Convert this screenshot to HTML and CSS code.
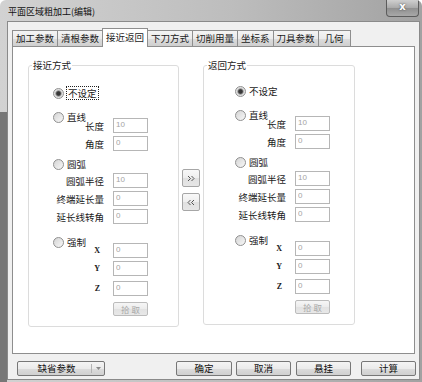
FILE: index.html
```html
<!DOCTYPE html>
<html lang="zh-CN">
<head>
  <meta charset="UTF-8" />
  <title>平面区域粗加工(编辑)</title>
  <link rel="stylesheet" href="styles.css">
</head>
<body>

  <div class="window">
    <div class="titlebar">
      <span class="title">平面区域粗加工(编辑)</span>
      <span class="close">x</span>
    </div>

    <div class="client">
      <div class="tabs">
        <span class="tab">加工参数</span>
        <span class="tab">清根参数</span>
        <span class="tab active">接近返回</span>
        <span class="tab">下刀方式</span>
        <span class="tab">切削用量</span>
        <span class="tab">坐标系</span>
        <span class="tab">刀具参数</span>
        <span class="tab">几何</span>
      </div>

      <div class="panel">
        <!-- 接近方式 -->
        <fieldset class="group">
          <legend>接近方式</legend>
          <div class="opt first"><span class="radio on"></span><span class="focus">不设定</span></div>

          <div class="opt"><span class="radio"></span>直线</div>
          <div class="field sub"><label>长度</label><input value="10" disabled></div>
          <div class="field"><label>角度</label><input value="0" disabled></div>

          <div class="opt near"><span class="radio"></span>圆弧</div>
          <div class="field tight"><label>圆弧半径</label><input value="10" disabled></div>
          <div class="field"><label>终端延长量</label><input value="0" disabled></div>
          <div class="field"><label>延长线转角</label><input value="0" disabled></div>

          <div class="opt far"><span class="radio"></span>强制</div>
          <div class="field sub"><label class="axis">X</label><input value="0" disabled></div>
          <div class="field"><label class="axis">Y</label><input value="0" disabled></div>
          <div class="field wide"><label class="axis">Z</label><input value="0" disabled></div>
          <div class="field wide"><span></span><button class="pick" disabled>拾 取</button></div>
        </fieldset>

        <div class="arrows">
          <button class="arrow">
            <svg width="8" height="7" viewBox="0 0 8 7"><path d="M1 1l2.5 2.5L1 6M4.5 1L7 3.5 4.5 6" fill="none" stroke="#555" stroke-width="1"/></svg>
          </button>
          <button class="arrow">
            <svg width="8" height="7" viewBox="0 0 8 7"><path d="M3.5 1L1 3.5 3.5 6M7 1L4.5 3.5 7 6" fill="none" stroke="#555" stroke-width="1"/></svg>
          </button>
        </div>

        <!-- 返回方式 -->
        <fieldset class="group right">
          <legend>返回方式</legend>
          <div class="opt first up"><span class="radio on"></span>不设定</div>

          <div class="opt"><span class="radio"></span>直线</div>
          <div class="field sub"><label>长度</label><input value="10" disabled></div>
          <div class="field"><label>角度</label><input value="0" disabled></div>

          <div class="opt near"><span class="radio"></span>圆弧</div>
          <div class="field tight"><label>圆弧半径</label><input value="10" disabled></div>
          <div class="field"><label>终端延长量</label><input value="0" disabled></div>
          <div class="field"><label>延长线转角</label><input value="0" disabled></div>

          <div class="opt far"><span class="radio"></span>强制</div>
          <div class="field sub"><label class="axis">X</label><input value="0" disabled></div>
          <div class="field"><label class="axis">Y</label><input value="0" disabled></div>
          <div class="field wide"><label class="axis">Z</label><input value="0" disabled></div>
          <div class="field wide"><span></span><button class="pick" disabled>拾 取</button></div>
        </fieldset>
      </div>

      <div class="footer">
        <button class="btn split">
          <span class="split-text">缺省参数</span>
          <span class="split-arrow">
            <svg width="5" height="3" viewBox="0 0 5 3"><path d="M0 0h5L2.5 3z" fill="#8a8a8a"/></svg>
          </span>
        </button>
        <button class="btn ok">确定</button>
        <button class="btn cancel">取消</button>
        <button class="btn hang">悬挂</button>
        <button class="btn calc">计算</button>
      </div>
    </div>
  </div>

</body>
</html>
```

FILE: styles.css
```css
* {
  box-sizing: border-box;
}

body {
  margin: 0;
  font-family: "Noto Sans CJK SC", "Noto Sans", sans-serif;
  font-size: 9.5px;
  color: #1a1a1a;
}

button,
input {
  font-family: inherit;
}

.window {
  width: 422px;
  height: 382px;
  display: flex;
  flex-direction: column;
  border-radius: 6px 6px 0 0;
  overflow: hidden;
  background:
    linear-gradient(#777, #777) 0 112px / 7px 100% no-repeat,
    linear-gradient(to right, #d2d2d2, #bdbdbd 55%, #a2a2a2);
}

/* title bar */
.titlebar {
  height: 21px;
  display: flex;
  justify-content: space-between;
}

.title {
  font-size: 9px;
  line-height: 12px;
  padding: 6px 0 0 8px;
  color: #111;
}

.close {
  width: 33px;
  height: 17px;
  margin-right: 3px;
  border: 1px solid #5c5c5c;
  border-top: none;
  border-radius: 0 0 4px 4px;
  background: linear-gradient(#cfcfcf, #a9a9a9 50%, #8f8f8f 50%, #a8a8a8);
  color: #fff;
  font-family: "DejaVu Sans", sans-serif;
  font-weight: bold;
  font-size: 10px;
  line-height: 14px;
  text-align: center;
  text-shadow: 0 0 2px #444;
}

/* client area */
.client {
  flex: 1;
  margin: 0 2px 2px 7px;
  border: 1px solid #8a8a8a;
  background: #f0f0f0;
}

.tabs {
  height: 24px;
  padding: 6px 0 0 4px;
  display: flex;
  align-items: flex-end;
}

.tab {
  height: 16px;
  min-width: 33px;
  padding: 0 3px;
  margin-right: -1px;
  border: 1px solid #8e8e8e;
  border-bottom: none;
  background: linear-gradient(#f4f4f4, #ebebeb 50%, #dddddd 50%, #cfcfcf);
  line-height: 14px;
  text-align: center;
}

.tab.active {
  height: 19px;
  margin-bottom: -1px;
  position: relative;
  z-index: 1;
  background: #fff;
  line-height: 16px;
}

.panel {
  height: 308px;
  margin: 0 4px;
  padding: 12px 0 0 15px;
  border: 1px solid #8e8e8e;
  background: #fff;
  display: flex;
  align-items: flex-start;
}

/* group boxes */
.group {
  width: 151px;
  margin: 0;
  padding: 0 0 10px 0;
  border: 1px solid #dcdcdc;
  border-radius: 3px;
  min-width: 0;
}

.group.right {
  width: 152px;
  padding-left: 7px;
}

.group legend {
  margin-left: 3px;
  padding: 0 1px;
  line-height: 12px;
}

.group.right legend {
  margin-left: -4px;
}

.opt {
  height: 14px;
  margin-top: 10px;
  padding-left: 24px;
  display: flex;
  align-items: center;
  gap: 3px;
  line-height: 14px;
}

.opt.first {
  margin-top: 15px;
}

.opt.up {
  margin-top: 13px;
}

.opt.near {
  margin-top: 6px;
}

.opt.far {
  margin-top: 11px;
}

.radio {
  width: 11px;
  height: 11px;
  border-radius: 50%;
  border: 1px solid #909090;
  background: linear-gradient(135deg, #d4d4d4, #f8f8f8);
}

.radio.on {
  background: radial-gradient(circle, #383838 0 1.8px, #8a8a8a 2.6px, #dcdcdc 3.6px, #f4f4f4);
}

.focus {
  outline: 1px dotted #222;
  outline-offset: 0;
  padding: 0 1px;
  line-height: 12px;
}

.field {
  height: 15px;
  margin-top: 3px;
  display: grid;
  grid-template-columns: 75px 35px;
  column-gap: 9px;
  align-items: center;
}

.field.sub {
  margin-top: -6px;
}

.field.tight {
  margin-top: 2px;
}

.field.wide {
  margin-top: 5px;
}

.field label {
  text-align: right;
  line-height: 14px;
}

.field label.axis {
  padding-right: 4px;
  font-family: "Liberation Serif", serif;
  font-weight: bold;
  font-size: 8px;
}

.field input {
  width: 35px;
  height: 15px;
  margin: 0;
  padding: 0 2px 3px;
  border: 1px solid #b6b6b6;
  background: #fff;
  color: #a4a4a4;
  font-family: "Liberation Sans", sans-serif;
  font-size: 8px;
}

.pick {
  width: 35px;
  height: 14px;
  padding: 0;
  border: 1px solid #bcbcbc;
  border-radius: 2px;
  background: linear-gradient(#f6f6f6, #ececec 50%, #e2e2e2 50%, #e8e8e8);
  color: #a8a8a8;
  font-size: 8.5px;
  line-height: 12px;
}

/* transfer buttons */
.arrows {
  width: 24px;
  padding: 110px 0 0 3px;
  display: flex;
  flex-direction: column;
  gap: 6px;
}

.arrow {
  width: 18px;
  height: 18px;
  padding: 0;
  border: 1px solid #a6a6a6;
  border-radius: 2px;
  background: linear-gradient(#f8f8f8, #eeeeee 50%, #e0e0e0 50%, #e6e6e6);
  display: flex;
  align-items: center;
  justify-content: center;
}

/* bottom buttons */
.footer {
  height: 25px;
  padding: 7px 3px 0 9px;
  display: flex;
  align-items: flex-start;
}

.btn {
  height: 15px;
  width: 55px;
  padding: 0;
  border: 1px solid #777;
  border-radius: 2px;
  background: linear-gradient(#f4f4f4, #ebebeb 50%, #dcdcdc 50%, #d0d0d0);
  color: #111;
  font-size: 9.5px;
  line-height: 13px;
}

.btn.split {
  width: 88px;
  display: flex;
  align-items: center;
}

.split-text {
  flex: 1;
  text-align: center;
  padding-left: 4px;
}

.split-arrow {
  width: 13px;
  height: 9px;
  border-left: 1px solid #b4b4b4;
  display: flex;
  align-items: center;
  justify-content: center;
}

.btn.ok {
  width: 56px;
  margin-left: auto;
}

.btn.cancel {
  margin-left: 4px;
}

.btn.hang {
  margin-left: 5px;
}

.btn.calc {
  margin-left: 10px;
}
```
